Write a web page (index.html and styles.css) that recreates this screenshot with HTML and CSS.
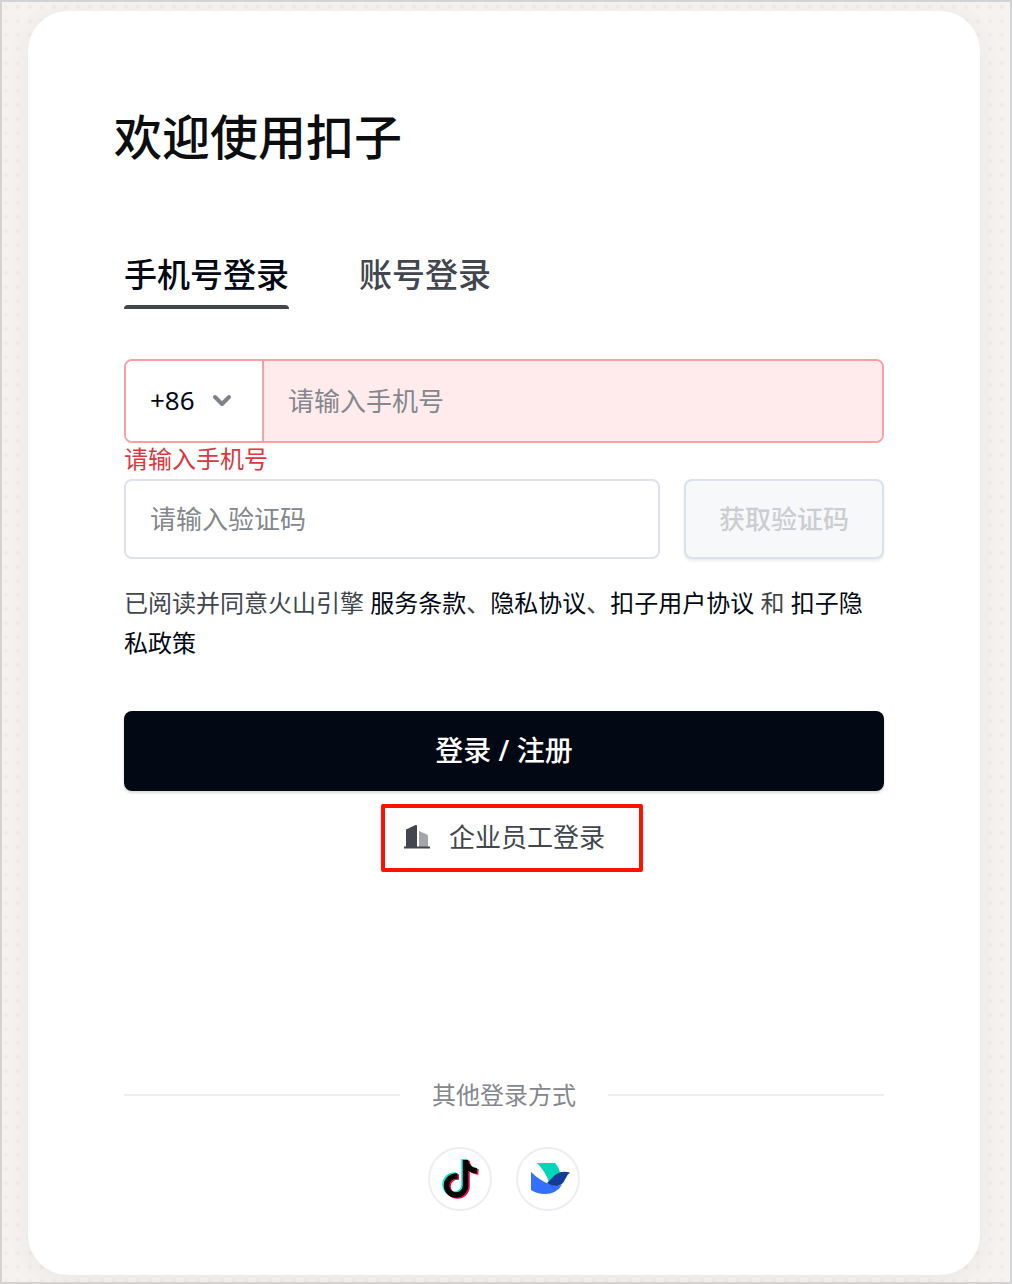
FILE: index.html
```html
<!DOCTYPE html>
<html lang="zh-CN">
<head>
    <meta charset="UTF-8">
    <meta name="viewport" content="width=device-width, initial-scale=1.0">
    <title>欢迎使用扣子</title>
    <link rel="stylesheet" href="styles.css">
</head>
<body>
    <main class="login-card">
        <h1 class="login-title">欢迎使用扣子</h1>

        <form class="login-form">
            <div class="tabs" role="tablist">
                <button type="button" class="tab tab-active" role="tab" aria-selected="true">手机号登录</button>
                <button type="button" class="tab" role="tab" aria-selected="false">账号登录</button>
            </div>

            <div class="phone-field">
                <div class="area-code">
                    <select class="area-select" aria-label="国家/地区代码">
                        <option>+86</option>
                    </select>
                    <svg class="chevron" viewBox="0 0 20 14" aria-hidden="true">
                        <path d="M3 3l7 7 7-7" fill="none" stroke="#808289" stroke-width="4" stroke-linecap="round" stroke-linejoin="round"/>
                    </svg>
                </div>
                <input class="phone-input" type="tel" placeholder="请输入手机号" aria-label="手机号" aria-invalid="true" aria-describedby="phoneError">
            </div>
            <p class="error-text" id="phoneError">请输入手机号</p>

            <div class="code-row">
                <input class="code-input" type="text" placeholder="请输入验证码" aria-label="验证码">
                <button type="button" class="code-btn" disabled>获取验证码</button>
            </div>

            <p class="agreement">已阅读并同意火山引擎 <a href="#">服务条款</a>、<a href="#">隐私协议</a>、<a href="#">扣子用户协议</a> 和 <a href="#">扣子隐私政策</a></p>

            <button type="submit" class="login-btn">登录 / 注册</button>

            <a class="enterprise-link" href="#">
                <svg class="building-icon" viewBox="0 0 28 28" aria-hidden="true">
                    <path d="M3 7.500L12.500 3Q14 2.500 14 4V25H3z" fill="#42464e"/>
                    <path d="M16 9l8 3.500q1 .5 1 1.500V25h-9z" fill="#a4a5ab"/>
                    <path d="M1 24.500h26v2H1z" fill="#42464e"/>
                </svg>
                企业员工登录
            </a>
        </form>

        <section class="other-login">
            <div class="divider">其他登录方式</div>
            <div class="social-list">
                <a class="social" href="#" aria-label="抖音">
                    <svg viewBox="0 0 60 60" aria-hidden="true">
                        <g fill="none" stroke-width="5.500">
                            <path d="M35 11v25.500a9.500 9.500 0 1 1-9.500-9.500h1.500M35 11c.5 6 5 10.500 11.500 11" stroke="#00f5ea" transform="translate(-1 -1)"/>
                            <path d="M35 11v25.500a9.500 9.500 0 1 1-9.500-9.500h1.500M35 11c.5 6 5 10.500 11.500 11" stroke="#ff0050" transform="translate(2 1)"/>
                            <path d="M35 11v25.500a9.500 9.500 0 1 1-9.500-9.500h1.500M35 11c.5 6 5 10.500 11.500 11" stroke="#000" transform="translate(.5 0)"/>
                        </g>
                    </svg>
                </a>
                <a class="social" href="#" aria-label="飞书">
                    <svg viewBox="0 0 60 60" aria-hidden="true">
                        <path d="M19 14h18q4 4 5 9l-7 7-4 3q-4-11-12-19z" fill="#00d6b9"/>
                        <path d="M13 23q8 8 18 12 7 3 13 1-6 9-17 9-8 0-14-4z" fill="#3370ff"/>
                        <path d="M29 34q5-5 8-8 6-5 15-2.500-3 2-5 7-3 6.500-8 6.500-6 0-10-3z" fill="#133c9a"/>
                    </svg>
                </a>
            </div>
        </section>
    </main>
</body>
</html>
```
FILE: styles.css
```css
* {
    box-sizing: border-box;
}

body {
    margin: 0;
    min-height: 100vh;
    display: flex;
    padding: 9px 30px 7px 26px;
    border: 2px solid #d3d3d3;
    font-family: "Noto Sans", "Noto Sans CJK SC", sans-serif;
    font-size: 26px;
    color: #42464e;
    background-color: #f5f2ef;
    /* Faint printed dots behind the card */
    background-image: radial-gradient(circle, #eeebe9 1px, transparent 3px);
    background-size: 12px 14px;
}

button,
input,
select {
    font: inherit;
    color: inherit;
}

a {
    color: inherit;
    text-decoration: none;
}

.login-card {
    flex: 1;
    display: flex;
    flex-direction: column;
    padding: 96px 86px 64px;
    background: #ffffff;
    border-radius: 40px;
    box-shadow: 0 4px 24px rgba(60, 50, 50, 0.06);
}

.login-title {
    margin: 0 0 84px;
    font-size: 48px;
    line-height: 60px;
    font-weight: 500;
    color: #0c0d0e;
}

.login-form {
    display: flex;
    flex-direction: column;
    padding: 0 10px;
}

.tabs {
    display: flex;
    gap: 70px;
    margin-bottom: 50px;
}

.tab {
    padding: 0 0 6px;
    border: none;
    border-bottom: 4px solid transparent;
    background: none;
    font-size: 33px;
    line-height: 48px;
    font-weight: 500;
    cursor: pointer;
    position: relative;
}

.tab-active {
    color: #020814;
}

.tab-active::after {
    content: "";
    position: absolute;
    left: 0;
    right: 0;
    bottom: -4px;
    height: 4px;
    border-radius: 4px 4px 0 0;
    background: #42464e;
}

.phone-field {
    display: flex;
    height: 84px;
    border: 2px solid #fb9fa5;
    border-radius: 8px;
    overflow: hidden;
}

.area-code {
    display: grid;
    align-items: center;
    width: 138px;
    border-right: 2px solid #fb9fa5;
}

.area-select,
.chevron {
    grid-area: 1 / 1;
}

.area-select {
    appearance: none;
    height: 100%;
    padding: 0 24px 2px;
    border: none;
    background: #ffffff;
    color: #020814;
}

.chevron {
    justify-self: end;
    width: 20px;
    height: 14px;
    margin-right: 30px;
    pointer-events: none;
}

.phone-input {
    flex: 1;
    min-width: 0;
    padding: 0 24px;
    border: none;
    background: #ffebec;
}

.phone-input::placeholder,
.code-input::placeholder {
    color: #84878d;
    opacity: 1;
}

.error-text {
    margin: 0 0 4px;
    font-size: 24px;
    line-height: 32px;
    color: #db373f;
}

.code-row {
    display: flex;
    gap: 24px;
    height: 80px;
    margin-bottom: 24px;
}

.code-input {
    flex: 1;
    min-width: 0;
    padding: 0 24px;
    border: 2px solid #dde2e9;
    border-radius: 8px;
}

.code-btn {
    padding: 0 33px 2px;
    border: 2px solid #dde2e9;
    border-radius: 8px;
    background: #f6f8fa;
    color: #cccdd0;
    font-weight: 500;
    box-shadow: 0 2px 3px rgba(0, 0, 0, 0.08);
}

.agreement {
    margin: 0 0 48px;
    font-size: 24px;
    line-height: 40px;
}

.agreement a {
    color: #020814;
}

.login-btn {
    height: 80px;
    padding: 0 24px 4px;
    border: none;
    border-radius: 8px;
    background: #020814;
    color: #ffffff;
    font-size: 28px;
    font-weight: 500;
    box-shadow: 0 2px 3px rgba(0, 0, 0, 0.15);
    cursor: pointer;
}

.enterprise-link {
    align-self: center;
    display: flex;
    align-items: center;
    gap: 18px;
    height: 68px;
    margin: 13px 0 0 16px;
    padding: 0 34px 4px 18px;
    border: 4px solid #ff1100;
    border-radius: 2px;
}

.building-icon {
    width: 28px;
    height: 28px;
}

.other-login {
    margin-top: auto;
    padding: 0 10px;
}

.divider {
    display: flex;
    align-items: center;
    gap: 32px;
    margin-bottom: 36px;
    font-size: 24px;
    line-height: 32px;
    color: #84878d;
}

.divider::before,
.divider::after {
    content: "";
    flex: 1;
    height: 2px;
    background: #ededf2;
}

.social-list {
    display: flex;
    justify-content: center;
    gap: 24px;
}

.social {
    width: 64px;
    height: 64px;
    border: 2px solid #ededf2;
    border-radius: 50%;
}

.social svg {
    display: block;
}
```
